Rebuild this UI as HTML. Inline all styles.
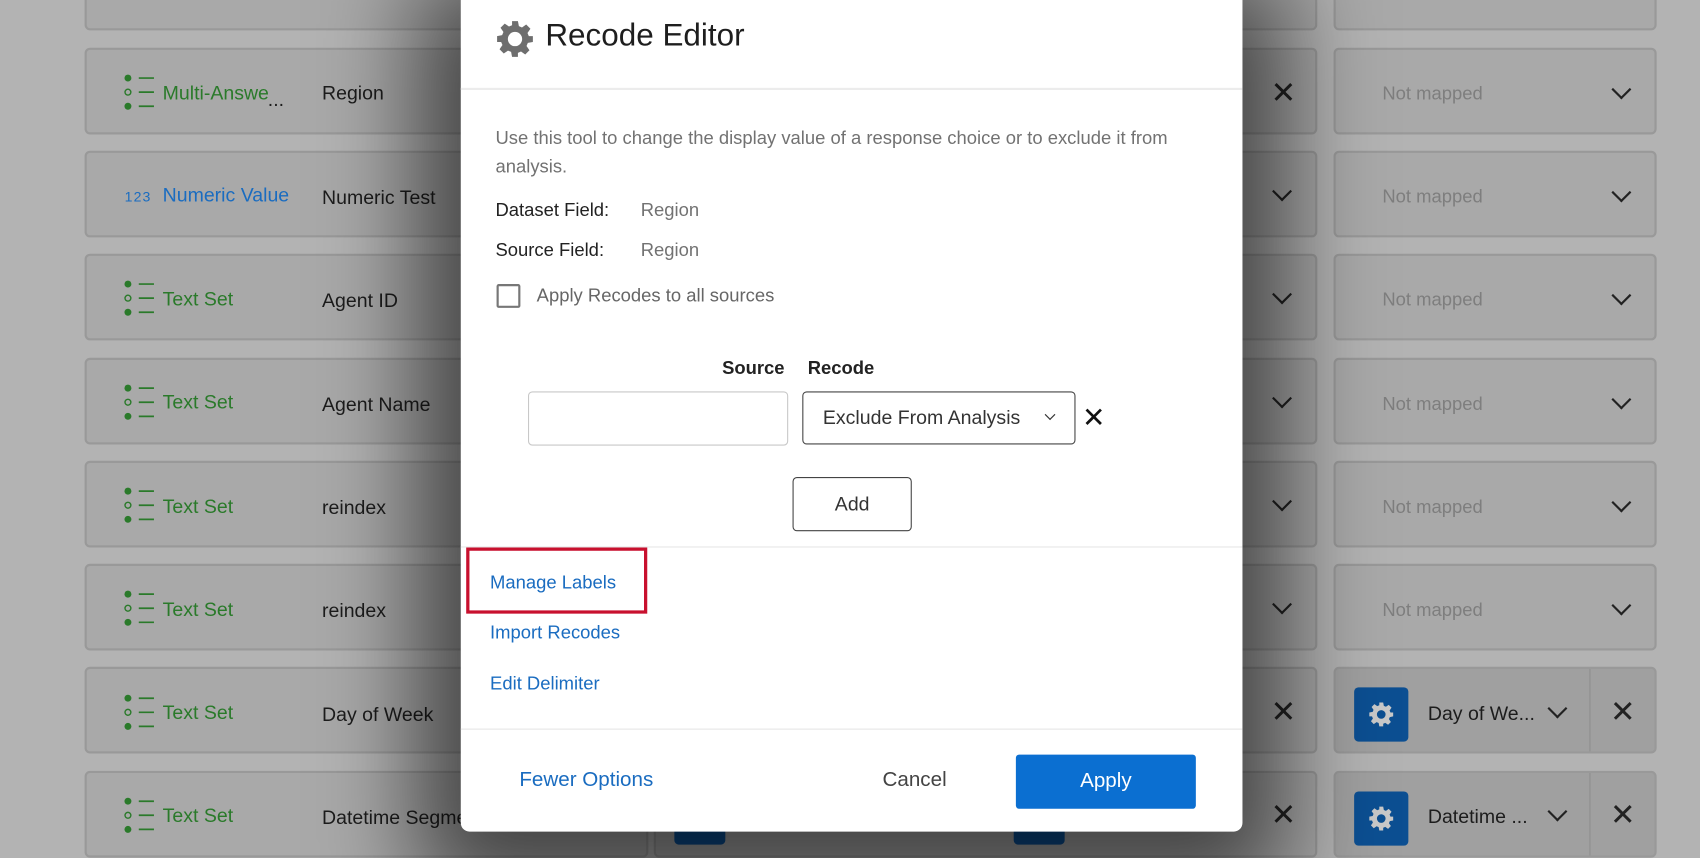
<!DOCTYPE html>
<html><head><meta charset="utf-8"><style>
*{margin:0;padding:0;box-sizing:border-box}
body{width:1700px;height:850px;overflow:hidden;background:#b3b3b3;font-family:"Liberation Sans",sans-serif;position:relative}
#w{position:absolute;left:0;top:0;width:1568px;height:784px;transform:scale(1.08418);transform-origin:0 0}
.a{position:absolute}
.card{position:absolute;background:#a9a9a9;border:2px solid #999;border-radius:5px}
.lt{position:absolute;font-size:18px;color:#1c1c1c}
.grn{color:#2a7a2a}
.nm{position:absolute;font-size:17px;color:#7e7e7e}
.chev{position:absolute;width:13px;height:13px;border-right:2px solid #222;border-bottom:2px solid #222;transform:rotate(45deg)}
.x{position:absolute;font-size:28px;color:#222;line-height:1}
.gbox{position:absolute;width:50px;height:50px;background:#0c4f92;border-radius:4px}
.modal{position:absolute;left:425px;top:0;width:721px;height:767px;background:#fff;border-radius:0 0 8px 8px;box-shadow:0 20px 90px 40px rgba(0,0,0,.6)}
.m{position:absolute;color:#222}
.link{color:#1a6cc0;font-size:18px}
</style></head><body><div id="w">

<div class="card" style="left:78px;top:-10px;width:520px;height:38px"></div>
<div class="card" style="left:603px;top:-10px;width:612px;height:38px"></div>
<div class="card" style="left:1230px;top:-10px;width:298px;height:38px"></div>

<div class="card" style="left:78px;top:44px;width:520px;height:80px"></div>
<div class="card" style="left:78px;top:139px;width:520px;height:80px"></div>
<div class="card" style="left:78px;top:234px;width:520px;height:80px"></div>
<div class="card" style="left:78px;top:330px;width:520px;height:80px"></div>
<div class="card" style="left:78px;top:425px;width:520px;height:80px"></div>
<div class="card" style="left:78px;top:520px;width:520px;height:80px"></div>
<div class="card" style="left:78px;top:615px;width:520px;height:80px"></div>
<div class="card" style="left:78px;top:711px;width:520px;height:80px"></div>

<div class="card" style="left:603px;top:44px;width:612px;height:80px"></div>
<div class="card" style="left:603px;top:139px;width:612px;height:80px"></div>
<div class="card" style="left:603px;top:234px;width:612px;height:80px"></div>
<div class="card" style="left:603px;top:330px;width:612px;height:80px"></div>
<div class="card" style="left:603px;top:425px;width:612px;height:80px"></div>
<div class="card" style="left:603px;top:520px;width:612px;height:80px"></div>
<div class="card" style="left:603px;top:615px;width:612px;height:80px"></div>
<div class="card" style="left:603px;top:711px;width:612px;height:80px"></div>
<div class="a" style="left:622px;top:731px;width:47px;height:48px;background:#0c4f92;border-radius:4px"></div>
<div class="a" style="left:935px;top:731px;width:47px;height:48px;background:#0c4f92;border-radius:4px"></div>

<div class="card" style="left:1230px;top:44px;width:298px;height:80px"></div>
<div class="card" style="left:1230px;top:139px;width:298px;height:80px"></div>
<div class="card" style="left:1230px;top:234px;width:298px;height:80px"></div>
<div class="card" style="left:1230px;top:330px;width:298px;height:80px"></div>
<div class="card" style="left:1230px;top:425px;width:298px;height:80px"></div>
<div class="card" style="left:1230px;top:520px;width:298px;height:80px"></div>
<div class="card" style="left:1230px;top:615px;width:298px;height:80px;background:#a0a0a0"></div>
<div class="card" style="left:1230px;top:711px;width:298px;height:80px;background:#a0a0a0"></div>

<svg class="a" style="left:112px;top:68px" width="32" height="36"><g fill="#2a7a2a"><circle cx="6" cy="4" r="3.2"/><circle cx="6" cy="30" r="3.2"/></g><circle cx="6" cy="17" r="2.7" fill="none" stroke="#2a7a2a" stroke-width="1.3"/><g stroke="#2a7a2a" stroke-width="1.6"><path d="M16 4h14M16 17h14M16 30h14"/></g></svg>
<div class="lt grn" style="left:150px;top:76px">Multi-Answe</div><div class="lt" style="left:247px;top:82px">...</div>
<div class="lt" style="left:297px;top:76px">Region</div>

<div class="a" style="left:115px;top:174px;font-size:13px;color:#1a6cc0;letter-spacing:1px">123</div>
<div class="lt" style="left:150px;top:170px;color:#1a6cc0">Numeric Value</div>
<div class="lt" style="left:297px;top:172px">Numeric Test</div>

<svg class="a" style="left:112px;top:258px" width="32" height="36"><g fill="#2a7a2a"><circle cx="6" cy="4" r="3.2"/><circle cx="6" cy="30" r="3.2"/></g><circle cx="6" cy="17" r="2.7" fill="none" stroke="#2a7a2a" stroke-width="1.3"/><path d="M16 4h14M16 17h14M16 30h14" stroke="#2a7a2a" stroke-width="1.6"/></svg>
<div class="lt grn" style="left:150px;top:266px">Text Set</div><div class="lt" style="left:297px;top:267px">Agent ID</div>
<svg class="a" style="left:112px;top:354px" width="32" height="36"><g fill="#2a7a2a"><circle cx="6" cy="4" r="3.2"/><circle cx="6" cy="30" r="3.2"/></g><circle cx="6" cy="17" r="2.7" fill="none" stroke="#2a7a2a" stroke-width="1.3"/><path d="M16 4h14M16 17h14M16 30h14" stroke="#2a7a2a" stroke-width="1.6"/></svg>
<div class="lt grn" style="left:150px;top:361px">Text Set</div><div class="lt" style="left:297px;top:363px">Agent Name</div>
<svg class="a" style="left:112px;top:449px" width="32" height="36"><g fill="#2a7a2a"><circle cx="6" cy="4" r="3.2"/><circle cx="6" cy="30" r="3.2"/></g><circle cx="6" cy="17" r="2.7" fill="none" stroke="#2a7a2a" stroke-width="1.3"/><path d="M16 4h14M16 17h14M16 30h14" stroke="#2a7a2a" stroke-width="1.6"/></svg>
<div class="lt grn" style="left:150px;top:457px">Text Set</div><div class="lt" style="left:297px;top:458px">reindex</div>
<svg class="a" style="left:112px;top:544px" width="32" height="36"><g fill="#2a7a2a"><circle cx="6" cy="4" r="3.2"/><circle cx="6" cy="30" r="3.2"/></g><circle cx="6" cy="17" r="2.7" fill="none" stroke="#2a7a2a" stroke-width="1.3"/><path d="M16 4h14M16 17h14M16 30h14" stroke="#2a7a2a" stroke-width="1.6"/></svg>
<div class="lt grn" style="left:150px;top:552px">Text Set</div><div class="lt" style="left:297px;top:553px">reindex</div>
<svg class="a" style="left:112px;top:640px" width="32" height="36"><g fill="#2a7a2a"><circle cx="6" cy="4" r="3.2"/><circle cx="6" cy="30" r="3.2"/></g><circle cx="6" cy="17" r="2.7" fill="none" stroke="#2a7a2a" stroke-width="1.3"/><path d="M16 4h14M16 17h14M16 30h14" stroke="#2a7a2a" stroke-width="1.6"/></svg>
<div class="lt grn" style="left:150px;top:647px">Text Set</div><div class="lt" style="left:297px;top:649px">Day of Week</div>
<svg class="a" style="left:112px;top:735px" width="32" height="36"><g fill="#2a7a2a"><circle cx="6" cy="4" r="3.2"/><circle cx="6" cy="30" r="3.2"/></g><circle cx="6" cy="17" r="2.7" fill="none" stroke="#2a7a2a" stroke-width="1.3"/><path d="M16 4h14M16 17h14M16 30h14" stroke="#2a7a2a" stroke-width="1.6"/></svg>
<div class="lt grn" style="left:150px;top:742px">Text Set</div><div class="lt" style="left:297px;top:744px">Datetime Segme</div>

<div class="x" style="left:1172px;top:72px">✕</div>
<div class="chev" style="left:1176px;top:170px"></div>
<div class="chev" style="left:1176px;top:265px"></div>
<div class="chev" style="left:1176px;top:361px"></div>
<div class="chev" style="left:1176px;top:456px"></div>
<div class="chev" style="left:1176px;top:551px"></div>
<div class="x" style="left:1172px;top:643px">✕</div>
<div class="x" style="left:1172px;top:738px">✕</div>

<div class="nm" style="left:1275px;top:77px">Not mapped</div><div class="chev" style="left:1489px;top:76px"></div>
<div class="nm" style="left:1275px;top:172px">Not mapped</div><div class="chev" style="left:1489px;top:171px"></div>
<div class="nm" style="left:1275px;top:267px">Not mapped</div><div class="chev" style="left:1489px;top:266px"></div>
<div class="nm" style="left:1275px;top:363px">Not mapped</div><div class="chev" style="left:1489px;top:362px"></div>
<div class="nm" style="left:1275px;top:458px">Not mapped</div><div class="chev" style="left:1489px;top:457px"></div>
<div class="nm" style="left:1275px;top:553px">Not mapped</div><div class="chev" style="left:1489px;top:552px"></div>

<div class="gbox" style="left:1249px;top:634px"></div>
<svg class="a" style="left:1262px;top:647px" width="24" height="24" viewBox="0 0 24 24"><path fill="#c9c9c9" fill-rule="evenodd" d="M10.2 1h3.6l.6 3.1 1.9.8 2.6-1.8 2.6 2.6-1.8 2.6.8 1.9L23 10.2v3.6l-3.1.6-.8 1.9 1.8 2.6-2.6 2.6-2.6-1.8-1.9.8L13.8 23h-3.6l-.6-3.1-1.9-.8-2.6 1.8-2.6-2.6 1.8-2.6-.8-1.9L1 13.8v-3.6l3.1-.6.8-1.9L3.1 5.1l2.6-2.6 2.6 1.8 1.9-.8zM12 8a4 4 0 1 0 0 8 4 4 0 0 0 0-8z"/></svg>
<div class="lt" style="left:1317px;top:648px">Day of We...</div><div class="chev" style="left:1430px;top:647px"></div>
<div class="a" style="left:1466px;top:617px;width:1px;height:76px;background:#8e8e8e"></div>
<div class="x" style="left:1485px;top:643px">✕</div>

<div class="gbox" style="left:1249px;top:730px"></div>
<svg class="a" style="left:1262px;top:743px" width="24" height="24" viewBox="0 0 24 24"><path fill="#c9c9c9" fill-rule="evenodd" d="M10.2 1h3.6l.6 3.1 1.9.8 2.6-1.8 2.6 2.6-1.8 2.6.8 1.9L23 10.2v3.6l-3.1.6-.8 1.9 1.8 2.6-2.6 2.6-2.6-1.8-1.9.8L13.8 23h-3.6l-.6-3.1-1.9-.8-2.6 1.8-2.6-2.6 1.8-2.6-.8-1.9L1 13.8v-3.6l3.1-.6.8-1.9L3.1 5.1l2.6-2.6 2.6 1.8 1.9-.8zM12 8a4 4 0 1 0 0 8 4 4 0 0 0 0-8z"/></svg>
<div class="lt" style="left:1317px;top:743px">Datetime ...</div><div class="chev" style="left:1430px;top:742px"></div>
<div class="a" style="left:1466px;top:713px;width:1px;height:76px;background:#8e8e8e"></div>
<div class="x" style="left:1485px;top:738px">✕</div>

<div class="modal">
  <svg class="a" style="left:32px;top:18px" width="36" height="36" viewBox="0 0 24 24"><path fill="#6e6e6e" fill-rule="evenodd" d="M10.2 1h3.6l.6 3.1 1.9.8 2.6-1.8 2.6 2.6-1.8 2.6.8 1.9L23 10.2v3.6l-3.1.6-.8 1.9 1.8 2.6-2.6 2.6-2.6-1.8-1.9.8L13.8 23h-3.6l-.6-3.1-1.9-.8-2.6 1.8-2.6-2.6 1.8-2.6-.8-1.9L1 13.8v-3.6l3.1-.6.8-1.9L3.1 5.1l2.6-2.6 2.6 1.8 1.9-.8zM12 7.6a4.4 4.4 0 1 0 0 8.8 4.4 4.4 0 0 0 0-8.8z"/></svg>
  <div class="m" style="left:78px;top:17px;font-size:29px;color:#1e1e1e">Recode Editor</div>
  <div class="a" style="left:0;top:81px;width:721px;height:2px;background:#ececec"></div>
  <div class="m" style="left:32px;top:115px;font-size:17px;color:#727272;line-height:26px;width:670px">Use this tool to change the display value of a response choice or to exclude it from analysis.</div>
  <div class="m" style="left:32px;top:184px;font-size:17px">Dataset Field:</div>
  <div class="m" style="left:166px;top:184px;font-size:17px;color:#727272">Region</div>
  <div class="m" style="left:32px;top:221px;font-size:17px">Source Field:</div>
  <div class="m" style="left:166px;top:221px;font-size:17px;color:#727272">Region</div>
  <div class="a" style="left:33px;top:262px;width:22px;height:22px;border:2px solid #777;border-radius:2px"></div>
  <div class="m" style="left:70px;top:263px;font-size:17px;color:#666">Apply Recodes to all sources</div>
  <div class="m" style="left:241px;top:330px;font-size:17px;font-weight:bold">Source</div>
  <div class="m" style="left:320px;top:330px;font-size:17px;font-weight:bold">Recode</div>
  <div class="a" style="left:62px;top:361px;width:240px;height:50px;border:1px solid #c8c8c8;border-radius:4px"></div>
  <div class="a" style="left:315px;top:361px;width:252px;height:49px;border:1px solid #444;border-radius:4px"></div>
  <div class="m" style="left:334px;top:375px;font-size:18px;color:#333">Exclude From Analysis</div>
  <div class="a" style="left:540px;top:379px;width:7px;height:7px;border-right:1.5px solid #333;border-bottom:1.5px solid #333;transform:rotate(45deg)"></div>
  <div class="m" style="left:573px;top:370px;font-size:26px;color:#111">✕</div>
  <div class="a" style="left:306px;top:440px;width:110px;height:50px;border:1px solid #444;border-radius:4px;text-align:center;line-height:48px;font-size:18px;color:#333">Add</div>
  <div class="a" style="left:0;top:504px;width:721px;height:1px;background:#e6e6e6"></div>
  <div class="a" style="left:5px;top:505px;width:167px;height:61px;border:3px solid #c8102e"></div>
  <div class="m link" style="left:27px;top:528px;font-size:17px">Manage Labels</div>
  <div class="m link" style="left:27px;top:574px;font-size:17px">Import Recodes</div>
  <div class="m link" style="left:27px;top:621px;font-size:17px">Edit Delimiter</div>
  <div class="a" style="left:0;top:672px;width:721px;height:1px;background:#e6e6e6"></div>
  <div class="m link" style="left:54px;top:709px;font-size:19px">Fewer Options</div>
  <div class="m" style="left:389px;top:709px;font-size:19px;color:#444">Cancel</div>
  <div class="a" style="left:512px;top:696px;width:166px;height:50px;background:#0b6fd1;border-radius:3px;color:#fff;text-align:center;line-height:50px;font-size:19px">Apply</div>
</div>
</div></body></html>
